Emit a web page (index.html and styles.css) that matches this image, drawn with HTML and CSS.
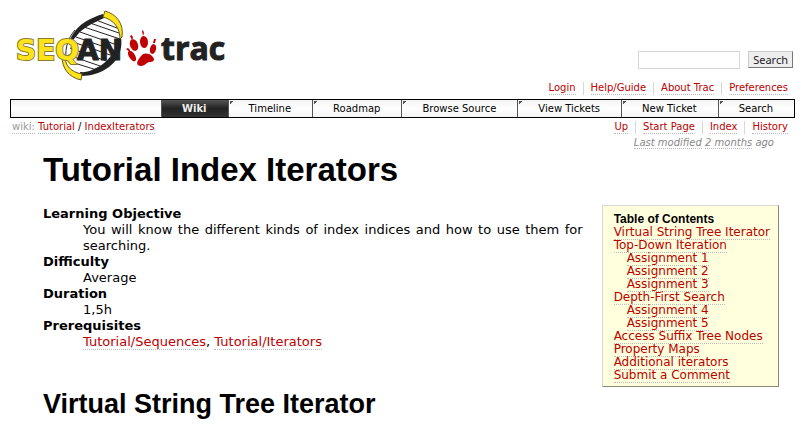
FILE: index.html
```html
<!DOCTYPE html>
<html lang="en">
<head>
<meta charset="utf-8">
<title>Tutorial Index Iterators – SeqAn</title>
<link rel="stylesheet" href="styles.css">
</head>
<body>
<header class="banner">
  <a class="logo" href="#" aria-label="SeqAn trac">
    <svg width="216" height="72" viewBox="0 0 216 72" role="img" aria-label="SeqAn trac">
      <path class="white" d="M56 47C55 34 62 18 77 12C84 8 90 6 96 5C106 9 111 17 111 28C111 46 94 63 71 65C62 62 57 56 56 47Z"/>
      <g class="rungs">
        <path d="M86 10l21 8M80 13l29 10M74 17l36 12M70 22l40 14M66 27l43 15M63 32l43 15M60 38l42 15M58 45l38 13M58 51l32 10"/>
        <path d="M65 20C58 28 55 38 56 48"/>
      </g>
      <path class="ink" d="M63 24C69 14 80 8 93 4L94 8C84 13 76 16 69 23C66 27 62 31 59 35C59 31 61 27 63 24Z"/>
      <path class="ink" d="M111 27C113 40 108 50 99 57C91 63 81 66 71 66L70 62C78 63 84 59 90 56C98 51 104 43 106 36Z"/>
      <path class="gold" d="M95 1C106 4 114 13 112 27L110 29C110 18 104 10 93 7Z"/>
      <path class="gold" d="M55 46C55 56 61 62 72 64L71 70C58 67 52 58 52 46Z"/>
      <text class="word yellow" x="6" y="50">SEQ</text>
      <text class="word dark" x="67" y="50">AN</text>
      <g class="paw">
        <path d="M131 46c2-3 5-3 8-2c3 1 4 3 5 5c0 4-4 2-7 4c-3 3-7 4-9 2c-2-2 0-5 3-9z"/>
        <ellipse cx="124" cy="35" rx="4" ry="6" transform="rotate(-20 124 35)"/>
        <ellipse cx="134" cy="32" rx="4" ry="6" transform="rotate(-5 134 32)"/>
        <ellipse cx="122" cy="46" rx="3" ry="6" transform="rotate(-32 122 46)"/>
        <ellipse cx="143" cy="39" rx="3" ry="5" transform="rotate(14 143 39)"/>
        <path d="M120 26l2-1l1 3l-1 2zM132 21l1-1l1 3l-1 3zM116 39l2-1l2 2v2zM144 29h2l-1 4h-2z"/>
      </g>
      <text class="word trac" x="151" y="50">trac</text>
    </svg>
  </a>
  <form class="search">
    <input type="text" aria-label="Search terms">
    <button type="button">Search</button>
  </form>
</header>
<nav class="links meta">
  <span><a href="#">Login</a></span><span><a href="#">Help/Guide</a></span><span><a href="#">About Trac</a></span><span><a href="#">Preferences</a></span>
</nav>
<nav class="tabs">
  <a class="active" href="#">Wiki</a><a href="#">Timeline</a><a href="#">Roadmap</a><a href="#">Browse Source</a><a href="#">View Tickets</a><a href="#">New Ticket</a><a href="#">Search</a>
</nav>
<div class="context">
  <div class="path"><a class="muted" href="#">wiki:</a> <a href="#">Tutorial</a> / <a href="#">IndexIterators</a></div>
  <nav class="links">
    <span><a href="#">Up</a></span><span><a href="#">Start Page</a></span><span><a href="#">Index</a></span><span><a href="#">History</a></span>
  </nav>
</div>
<p class="modified"><a href="#">Last modified</a> <a href="#">2 months</a> ago</p>
<main>
  <h1>Tutorial Index Iterators</h1>
  <div class="intro">
    <dl>
      <dt>Learning Objective</dt>
      <dd>You will know the different kinds of index indices and how to use them for searching.</dd>
      <dt>Difficulty</dt>
      <dd>Average</dd>
      <dt>Duration</dt>
      <dd>1,5h</dd>
      <dt>Prerequisites</dt>
      <dd><a href="#">Tutorial/Sequences</a>, <a href="#">Tutorial/Iterators</a></dd>
    </dl>
    <aside class="toc">
      <h4>Table of Contents</h4>
      <ol>
        <li><a href="#">Virtual String Tree Iterator</a></li>
        <li><a href="#">Top-Down Iteration</a>
          <ol>
            <li><a href="#">Assignment 1</a></li>
            <li><a href="#">Assignment 2</a></li>
            <li><a href="#">Assignment 3</a></li>
          </ol>
        </li>
        <li><a href="#">Depth-First Search</a>
          <ol>
            <li><a href="#">Assignment 4</a></li>
            <li><a href="#">Assignment 5</a></li>
          </ol>
        </li>
        <li><a href="#">Access Suffix Tree Nodes</a></li>
        <li><a href="#">Property Maps</a></li>
        <li><a href="#">Additional iterators</a></li>
        <li><a href="#">Submit a Comment</a></li>
      </ol>
    </aside>
  </div>
  <h2>Virtual String Tree Iterator</h2>
</main>
</body>
</html>
```
FILE: styles.css
```css
* {
  box-sizing: border-box;
}
body {
  margin: 10px;
  background: #fff;
  color: #000;
  font: 13px/16px Verdana, "DejaVu Sans", sans-serif;
}
a {
  color: #b00;
  text-decoration: none;
  border-bottom: 1px dotted #bbb;
}
.banner {
  display: flex;
  justify-content: space-between;
  align-items: flex-end;
}
.logo {
  border: 0;
}
.logo svg {
  display: block;
}
.white { fill: #fff; }
.rungs { fill: none; stroke: #222; stroke-width: 1; }
.ink { fill: #222; }
.gold { fill: #fde21c; stroke: #655b18; stroke-width: 1; }
.word { font: bold 28px "DejaVu Sans", sans-serif; }
.yellow {
  fill: #fde21c;
  stroke: #8a7d30;
  stroke-width: 2;
  paint-order: stroke;
}
.dark { fill: #222; stroke: #222; stroke-width: 1; }
.trac {
  font: bold 32px "Open Sans", sans-serif;
  fill: #222;
  stroke: #222;
  stroke-width: 1;
}
.paw { fill: #c00000; }
.search {
  display: flex;
  gap: 8px;
  margin: 0 2px 13px 0;
}
.search input {
  width: 102px;
  height: 18px;
  border: 1px solid #d7d7d7;
  padding: 0 4px;
}
.search button {
  height: 17px;
  padding: 0 4px;
  border: 1px solid;
  border-color: #ccc #777 #777 #ccc;
  background: #eee;
  color: #222;
  font: 11px/14px "Noto Sans", sans-serif;
}
.links {
  display: flex;
  justify-content: flex-end;
  font-size: 10px;
  line-height: 12px;
  padding-right: 7px;
}
.links span + span {
  margin-left: 7px;
  padding-left: 7px;
  border-left: 1px solid #d7d7d7;
}
.links a,
.path a {
  display: inline-block;
}
.meta {
  margin-bottom: 4px;
}
.tabs {
  display: flex;
  justify-content: flex-end;
  height: 19px;
  border: 1px solid #000;
  background: linear-gradient(#f4f4f4, #fff 50%, #f4f4f4);
  font-size: 10px;
  line-height: 17px;
}
.tabs a {
  padding: 0 21px 0 20px;
  border: 0;
  border-left: 1px solid #555;
  color: #000;
  background: linear-gradient(135deg, #555 50%, transparent 50%) 1px 1px / 4px 4px no-repeat;
}
.tabs .active {
  background: linear-gradient(#555, #222 50%, #333);
  color: #eee;
  font-weight: bold;
}
.context {
  display: flex;
  justify-content: space-between;
  margin-top: 3px;
  font-size: 10px;
  line-height: 12px;
}
.path {
  padding-left: 2px;
}
.path .muted {
  color: #999;
}
.modified {
  margin: 2px 21px 0 0;
  color: #888;
  font-size: 10px;
  line-height: 14px;
  font-style: italic;
  text-align: right;
}
.modified a {
  color: #888;
}
main {
  margin: 0 16px 0 33px;
}
h1, h2, h4 {
  margin: 0;
  font-family: Arial, "Liberation Sans", sans-serif;
  font-weight: bold;
}
h1 {
  font-size: 33px;
  line-height: 40px;
}
.intro {
  display: flex;
  align-items: flex-start;
  gap: 19px;
  margin-top: 15px;
}
dl {
  flex: 1;
  margin: 0;
  padding-top: 1px;
  text-align: justify;
}
dt {
  font-weight: bold;
}
dd {
  margin: 0 0 0 40px;
}
.toc {
  padding: 6px 8px 4px 11px;
  border: 1px solid;
  border-color: #d7d7d7 #887 #887 #d7d7d7;
  background: #ffffdd;
  font-size: 12px;
  line-height: 13px;
}
h4 {
  font-size: 12px;
  line-height: 14px;
}
ol {
  margin: 0;
  padding: 0;
  list-style: none;
}
ol ol {
  padding-left: 13px;
}
h2 {
  font-size: 27px;
  line-height: 34px;
}
```
